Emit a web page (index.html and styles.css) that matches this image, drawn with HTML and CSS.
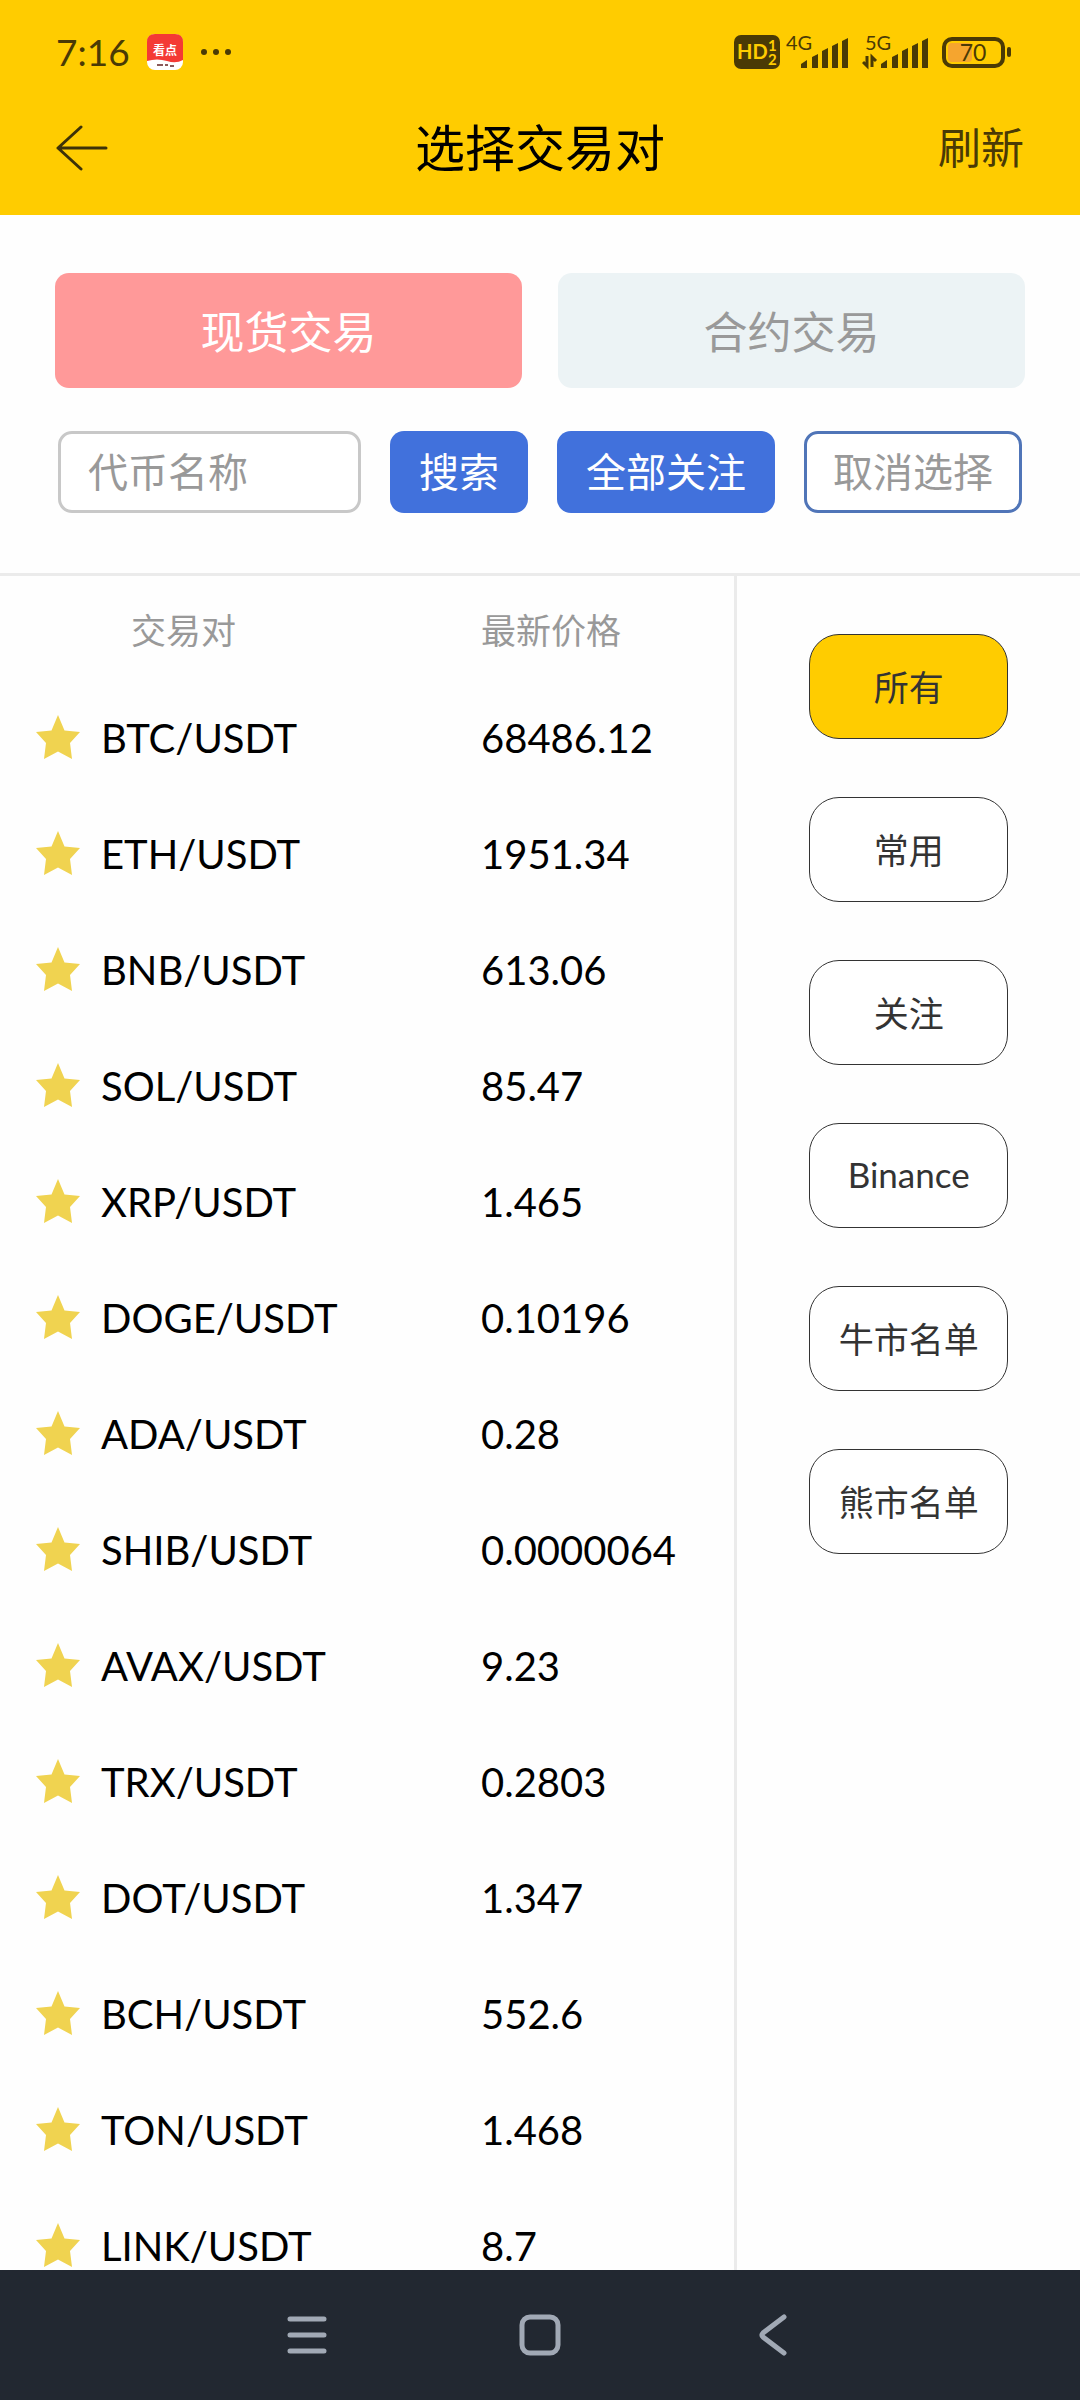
FILE: index.html
```html
<!DOCTYPE html>
<html lang="zh-CN">
<head>
    <title>选择交易对</title>
    <meta charset="utf-8">
    <meta name="viewport" content="width=device-width, initial-scale=1">
    <link rel="stylesheet" href="styles.css">
</head>

<body>
    <svg class="sprite" aria-hidden="true">
        <symbol id="star" viewBox="0 0 44 44">
            <path d="M22 0 L28.5 15.5 L44 17 L34 28 L36 44 L22 36.5 L8 44 L10 28 L0 17 L15.5 15.5 Z" fill="#f0d350"/>
        </symbol>
        <symbol id="bars" viewBox="0 0 50 32">
            <path d="M1 31 V27 L7 23 V31 Z M12 31 V20 L18 17 V31 Z M22 31 V14 L28 11 V31 Z M32 31 V9 L38 6 V31 Z M42 31 V4 L48 1 V31 Z" fill="#4a3a05"/>
        </symbol>
    </svg>

    <div class="top">
        <div class="status">
            <div class="status-side">
                <span class="time">7:16</span>
                <svg class="app" width="36" height="36" viewBox="0 0 36 36">
                    <rect width="36" height="36" rx="8" fill="#fff"/>
                    <path d="M0 27 V8 Q0 0 8 0 H28 Q36 0 36 8 V26 Q29 30 20 27 Q10 24 0 27 Z" fill="#f43a34"/>
                    <text x="18" y="21" font-size="12" font-weight="700" text-anchor="middle" fill="#fff">看点</text>
                    <path d="M10 31 H16 M18 31 H21 M23 32 H27" stroke="#8a5a5a" stroke-width="2"/>
                </svg>
                <svg width="32" height="8" viewBox="0 0 32 8" fill="#4a3a05">
                    <circle cx="4" cy="4" r="3"/>
                    <circle cx="16" cy="4" r="3"/>
                    <circle cx="28" cy="4" r="3"/>
                </svg>
            </div>
            <div class="status-icons">
                <svg width="46" height="46" viewBox="0 -6 46 46">
                    <rect width="46" height="34" rx="7" fill="#4a3a05"/>
                    <g fill="#ffcc00" font-weight="700">
                        <text x="3" y="24" font-size="20">HD</text>
                        <text x="34" y="16" font-size="15">1</text>
                        <text x="34" y="30" font-size="15">2</text>
                    </g>
                </svg>
                <svg width="70" height="46" viewBox="0 -6 70 46">
                    <text x="0" y="15" font-size="20" fill="#4a3a05">4G</text>
                    <use href="#bars" x="14" y="2" width="50" height="32"/>
                </svg>
                <svg width="72" height="46" viewBox="0 -6 72 46">
                    <text x="3" y="15" font-size="20" fill="#4a3a05">5G</text>
                    <path d="M5 21 V31 L1 27 M10 32 V22 L14 26" fill="none" stroke="#4a3a05" stroke-width="3"/>
                    <use href="#bars" x="18" y="2" width="50" height="32"/>
                </svg>
                <svg width="72" height="46" viewBox="0 -6 72 46">
                    <rect x="4" y="4" width="59" height="27" rx="8" fill="none" stroke="#4a3a05" stroke-width="4"/>
                    <rect x="8" y="8" width="24" height="19" rx="4" fill="#f5a52f"/>
                    <rect x="67" y="12" width="4" height="10" rx="2" fill="#4a3a05"/>
                    <text x="33" y="26" font-size="23" text-anchor="middle" fill="#4a3a05">70</text>
                </svg>
            </div>
        </div>
        <header class="header">
            <a class="back" href="#" aria-label="返回">
                <svg width="52" height="46" viewBox="0 0 52 46" fill="none" stroke="#3d3208" stroke-width="3" stroke-linecap="round" stroke-linejoin="round">
                    <path d="M25 2 L2 23 L25 44 M2 23 H50"/>
                </svg>
            </a>
            <h1>选择交易对</h1>
            <button class="refresh" type="button">刷新</button>
        </header>
    </div>

    <div class="tabs">
        <button class="tab active" type="button">现货交易</button>
        <button class="tab" type="button">合约交易</button>
    </div>

    <form class="search">
        <input type="text" id="token" placeholder="代币名称" aria-label="代币名称">
        <button class="btn" type="button">搜索</button>
        <button class="btn" type="button">全部关注</button>
        <button class="btn outline" type="button">取消选择</button>
    </form>

    <main class="content">
        <section class="list">
            <table>
                <thead>
                    <tr><td class="fav"></td><th class="pair">交易对</th><th>最新价格</th></tr>
                </thead>
                <tbody>
                    <tr><td><button class="star" type="button" aria-label="BTC"><svg><use href="#star"/></svg></button></td><td>BTC/USDT</td><td>68486.12</td></tr>
                    <tr><td><button class="star" type="button" aria-label="ETH"><svg><use href="#star"/></svg></button></td><td>ETH/USDT</td><td>1951.34</td></tr>
                    <tr><td><button class="star" type="button" aria-label="BNB"><svg><use href="#star"/></svg></button></td><td>BNB/USDT</td><td>613.06</td></tr>
                    <tr><td><button class="star" type="button" aria-label="SOL"><svg><use href="#star"/></svg></button></td><td>SOL/USDT</td><td>85.47</td></tr>
                    <tr><td><button class="star" type="button" aria-label="XRP"><svg><use href="#star"/></svg></button></td><td>XRP/USDT</td><td>1.465</td></tr>
                    <tr><td><button class="star" type="button" aria-label="DOGE"><svg><use href="#star"/></svg></button></td><td>DOGE/USDT</td><td>0.10196</td></tr>
                    <tr><td><button class="star" type="button" aria-label="ADA"><svg><use href="#star"/></svg></button></td><td>ADA/USDT</td><td>0.28</td></tr>
                    <tr><td><button class="star" type="button" aria-label="SHIB"><svg><use href="#star"/></svg></button></td><td>SHIB/USDT</td><td>0.0000064</td></tr>
                    <tr><td><button class="star" type="button" aria-label="AVAX"><svg><use href="#star"/></svg></button></td><td>AVAX/USDT</td><td>9.23</td></tr>
                    <tr><td><button class="star" type="button" aria-label="TRX"><svg><use href="#star"/></svg></button></td><td>TRX/USDT</td><td>0.2803</td></tr>
                    <tr><td><button class="star" type="button" aria-label="DOT"><svg><use href="#star"/></svg></button></td><td>DOT/USDT</td><td>1.347</td></tr>
                    <tr><td><button class="star" type="button" aria-label="BCH"><svg><use href="#star"/></svg></button></td><td>BCH/USDT</td><td>552.6</td></tr>
                    <tr><td><button class="star" type="button" aria-label="TON"><svg><use href="#star"/></svg></button></td><td>TON/USDT</td><td>1.468</td></tr>
                    <tr><td><button class="star" type="button" aria-label="LINK"><svg><use href="#star"/></svg></button></td><td>LINK/USDT</td><td>8.7</td></tr>
                </tbody>
            </table>
        </section>
        <aside class="groups">
            <button class="group active" type="button">所有</button>
            <button class="group" type="button">常用</button>
            <button class="group" type="button">关注</button>
            <button class="group" type="button">Binance</button>
            <button class="group" type="button">牛市名单</button>
            <button class="group" type="button">熊市名单</button>
        </aside>
    </main>

    <nav class="navbar">
        <button type="button" aria-label="菜单">
            <svg width="44" height="44" viewBox="0 0 44 44"><path d="M5 6 H39 M5 22 H39 M5 38 H39"/></svg>
        </button>
        <button type="button" aria-label="主页">
            <svg width="44" height="44" viewBox="0 0 44 44"><rect x="4" y="4" width="36" height="36" rx="8"/></svg>
        </button>
        <button type="button" aria-label="返回">
            <svg width="44" height="44" viewBox="0 0 44 44"><path d="M33 4 L12 20 Q10 22 12 24 L33 40"/></svg>
        </button>
    </nav>
</body>
</html>
```

FILE: styles.css
```css
* {
    box-sizing: border-box;
}

body {
    margin: 0;
    height: 100vh;
    display: flex;
    flex-direction: column;
    background-color: #fefefe;
    color: #000;
    font-family: Lato, "Noto Sans CJK SC", sans-serif;
}

button, input {
    font-family: inherit;
    margin: 0;
    padding: 0;
    border: none;
    background: none;
}

svg {
    display: block;
}

.sprite {
    position: absolute;
    width: 0;
    height: 0;
}

/* status bar and title */
.top {
    background-color: #ffcc00;
    padding: 24px 56px 0;
}

.status {
    display: flex;
    justify-content: space-between;
    align-items: center;
    height: 56px;
    padding-right: 12px;
}

.status-side {
    display: flex;
    align-items: center;
    gap: 17px;
}

.status-icons {
    display: flex;
    gap: 6px;
}

.time {
    font-size: 37px;
    line-height: 56px;
    color: #4a3a05;
}

.header {
    display: grid;
    grid-template-columns: 1fr auto 1fr;
    align-items: center;
    height: 135px;
}

.back {
    justify-self: start;
}

.header h1 {
    margin: 0;
    font-size: 50px;
    line-height: 60px;
    font-weight: 400;
}

.refresh {
    justify-self: end;
    font-size: 43px;
    line-height: 60px;
    color: #4a3a05;
}

/* spot / contract */
.tabs {
    display: flex;
    gap: 36px;
    padding: 58px 55px 43px;
}

.tab {
    flex: 1;
    height: 115px;
    padding-bottom: 2px;
    border-radius: 14px;
    font-size: 44px;
    color: #999;
    background-color: #ecf3f5;
}

.tab.active {
    color: #fff;
    background-color: #ff9999;
}

.search {
    display: flex;
    gap: 29px;
    padding: 0 58px 60px;
    border-bottom: 3px solid #ebebeb;
}

.search input {
    flex: 1;
    min-width: 0;
    height: 82px;
    padding: 0 27px;
    border: 3px solid #c8c8c8;
    border-radius: 14px;
    font-size: 40px;
    background-color: #fff;
}

.search input::placeholder {
    color: #999;
}

.btn {
    height: 82px;
    padding: 0 29px 4px;
    border-radius: 14px;
    font-size: 40px;
    color: #fff;
    background-color: #4171dc;
}

.btn.outline {
    padding: 0 26px 4px;
    border: 3px solid #5075b8;
    color: #999;
    background-color: #fff;
}

/* pairs */
.content {
    flex: 1;
    min-height: 0;
    display: flex;
}

.list {
    flex: 15;
    overflow-y: auto;
    scrollbar-width: none;
    border-right: 3px solid #ebebeb;
}

table {
    width: 100%;
    table-layout: fixed;
    border-collapse: collapse;
}

th, td {
    height: 116px;
    padding: 0;
    font-size: 40px;
    text-align: left;
    vertical-align: middle;
}

thead th, thead td {
    height: 104px;
    font-size: 35px;
    font-weight: 400;
    color: #999;
}

thead .fav {
    width: 101px;
}

thead .pair {
    width: 380px;
    padding-left: 30px;
}

.star {
    display: block;
    margin-left: 36px;
    padding-bottom: 3px;
}

.star svg {
    width: 44px;
    height: 44px;
}

.groups {
    flex: 7;
    display: flex;
    flex-direction: column;
    align-items: center;
    gap: 58px;
    padding-top: 58px;
}

.group {
    width: 58%;
    height: 105px;
    padding-bottom: 3px;
    border: 1px solid #333;
    border-radius: 30px;
    font-size: 35px;
    color: #333;
    background-color: #fff;
}

.group.active {
    background-color: #ffcc00;
}

/* system buttons */
.navbar {
    display: flex;
    justify-content: center;
    align-items: center;
    gap: 189px;
    height: 130px;
    background-color: #222831;
}

.navbar svg {
    fill: none;
    stroke: #a1a9b5;
    stroke-width: 5;
    stroke-linecap: round;
}
```
